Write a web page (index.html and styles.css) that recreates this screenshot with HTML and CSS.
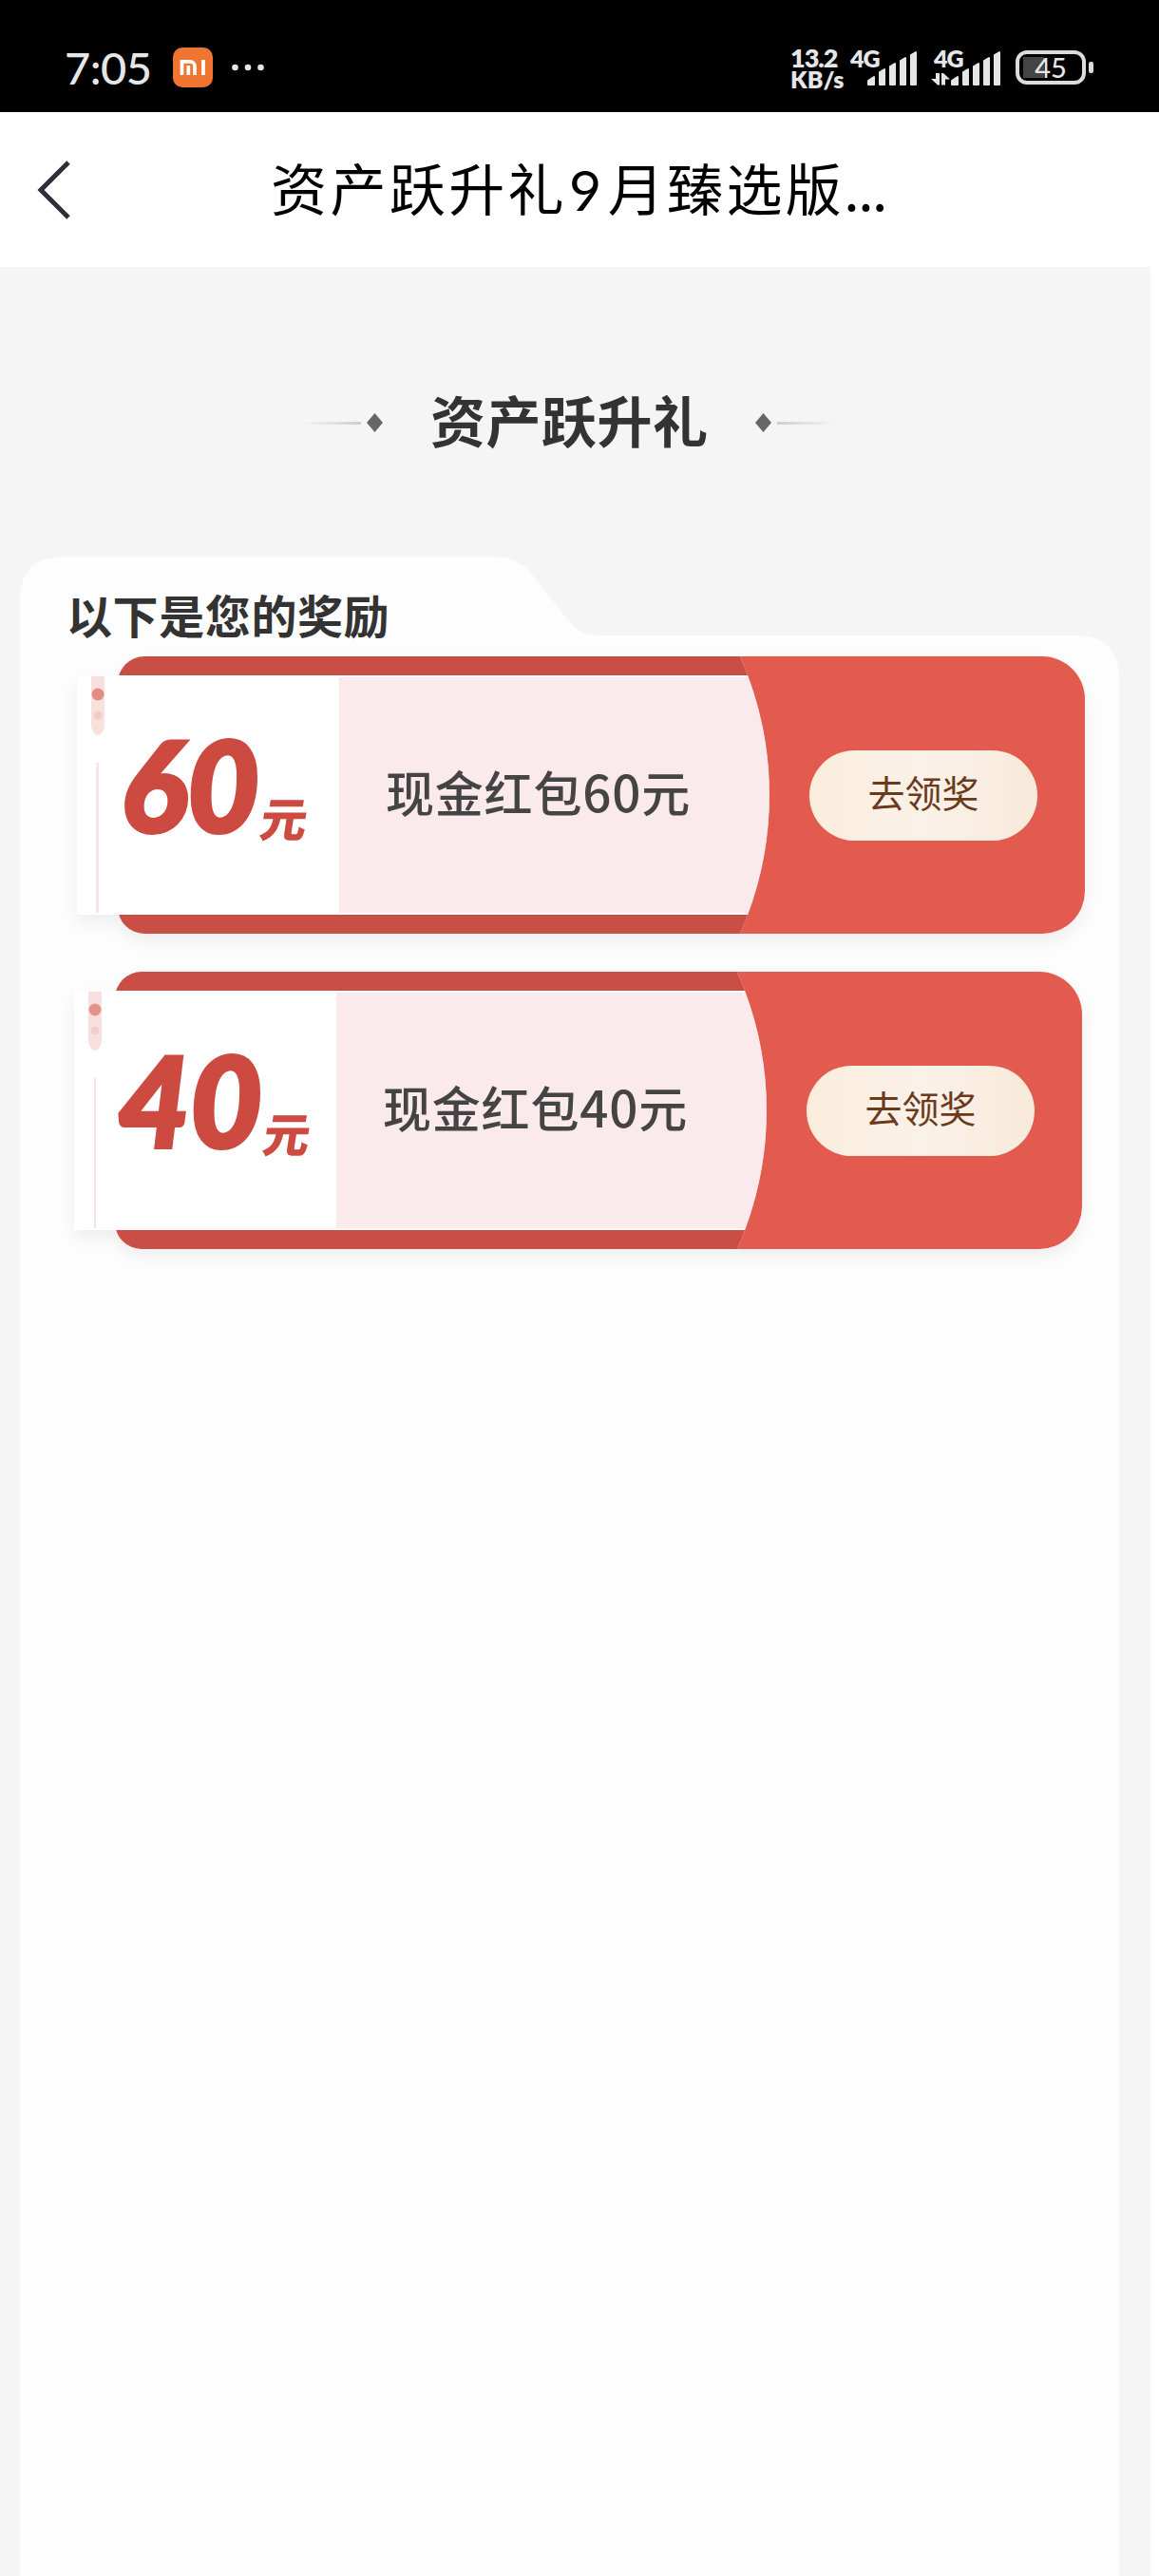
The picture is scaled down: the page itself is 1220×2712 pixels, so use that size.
FILE: index.html
```html
<!DOCTYPE html>
<html lang="zh-CN">
<head>
    <meta charset="UTF-8">
    <meta name="viewport" content="width=device-width, initial-scale=1.0">
    <title>资产跃升礼9月臻选版</title>
    <link rel="stylesheet" href="styles.css">
</head>
<body>
    <div class="status-bar">
        <span class="time">7:05</span>
        <svg class="app-icon" width="42" height="42" viewBox="0 0 42 42">
            <rect width="42" height="42" rx="10" fill="#f07530"/>
            <path d="M9.5 29V14.800H18a5 5 0 0 1 5 5V29M16.300 19v10M32 13v16" fill="none" stroke="#fff" stroke-width="3.800"/>
        </svg>
        <svg class="more" width="34" height="8" viewBox="0 0 34 8">
            <circle cx="3.5" cy="4" r="3.3"/><circle cx="17" cy="4" r="3.3"/><circle cx="30.5" cy="4" r="3.3"/>
        </svg>
        <div class="speed"><span>13.2</span><span class="unit">KB/s</span></div>
        <div class="signal">
            <span class="network">4G</span>
            <svg width="72" height="40" viewBox="0 0 72 40">
                <path d="M20 38V34l6-4v8zM32 38V25l5-3v16zM43 38V19l5-3v22zM54 38V13l5-3v28zM65 38V7l5-3v34z" stroke-width="2" stroke-linejoin="round"/>
            </svg>
        </div>
        <div class="signal second">
            <span class="network">4G</span>
            <svg width="72" height="40" viewBox="0 0 72 40">
                <path d="M20 38V34l6-4v8zM32 38V25l5-3v16zM43 38V19l5-3v22zM54 38V13l5-3v28zM65 38V7l5-3v34z" stroke-width="2" stroke-linejoin="round"/>
                <path d="M3 26h4v12.500H5L-2 32h5zM9 38.500V26h2l7 6.500h-5v6z"/>
            </svg>
        </div>
        <div class="battery"><span>45</span></div>
    </div>

    <header class="nav-bar">
        <svg class="back" width="36" height="64" viewBox="0 0 36 64">
            <path d="M33 3L4 32l29 29" fill="none" stroke="#312e3c" stroke-width="5"/>
        </svg>
        <h1>资产跃升礼<span class="digit">9</span>月臻选版<span class="dots">...</span></h1>
    </header>

    <main class="page">
        <div class="section-title">
            <i class="line"></i>
            <svg width="17" height="20" viewBox="0 0 17 20"><path d="M8.500 0L17 10 8.500 20 0 10z" fill="#666"/></svg>
            <h2>资产跃升礼</h2>
            <svg width="17" height="20" viewBox="0 0 17 20"><path d="M8.500 0L17 10 8.500 20 0 10z" fill="#666"/></svg>
            <i class="line right"></i>
        </div>

        <section class="panel">
            <!-- folder tab outline -->
            <svg class="panel-shape" width="1157" height="2127" viewBox="0 0 1157 2127">
                <path d="M0 2127V47Q0 1 46 1H500Q525 1 540 21L578 69Q590 84 612 84H1111Q1157 84 1157 130V2127z" fill="#fdfdfd"/>
            </svg>
            <h3>以下是您的奖励</h3>

            <div class="coupon">
                <svg class="coupon-shape" width="1061" height="292" viewBox="0 0 1061 292">
                    <rect x="43" width="500" height="292" rx="28" fill="#c94f46"/>
                    <path d="M250 0H698A359 359 0 0 1 698 292H250z" fill="#c94f46"/>
                    <path d="M698 0H1016a45 45 0 0 1 45 45V247a45 45 0 0 1-45 45H698A359 359 0 0 0 698 0z" fill="#e35b4e"/>
                    <path d="M0 20H706A359 359 0 0 1 706 272H0z" fill="#fff"/>
                    <path d="M276 22H706.500A359 359 0 0 1 706.500 270H276z" fill="#faeaeb"/>
                    <path d="M15 21H29V71A7 12 0 0 1 15 71z" fill="#f8e0df"/>
                    <circle cx="22" cy="40" r="6.500" fill="#e48d84"/>
                    <circle cx="22" cy="62" r="4.500" fill="#f5cbc7"/>
                    <rect x="20" y="112" width="3" height="158" fill="#f8e5e5"/>
                </svg>
                <div class="amount"><b>60</b><span>元</span></div>
                <div class="name">现金红包<span>60</span>元</div>
                <button>去领奖</button>
            </div>

            <div class="coupon shifted">
                <svg class="coupon-shape" width="1061" height="292" viewBox="0 0 1061 292">
                    <rect x="43" width="500" height="292" rx="28" fill="#c94f46"/>
                    <path d="M250 0H698A359 359 0 0 1 698 292H250z" fill="#c94f46"/>
                    <path d="M698 0H1016a45 45 0 0 1 45 45V247a45 45 0 0 1-45 45H698A359 359 0 0 0 698 0z" fill="#e35b4e"/>
                    <path d="M0 20H706A359 359 0 0 1 706 272H0z" fill="#fff"/>
                    <path d="M276 22H706.500A359 359 0 0 1 706.500 270H276z" fill="#faeaeb"/>
                    <path d="M15 21H29V71A7 12 0 0 1 15 71z" fill="#f8e0df"/>
                    <circle cx="22" cy="40" r="6.500" fill="#e2938b"/>
                    <circle cx="22" cy="62" r="4.500" fill="#f3cfca"/>
                    <rect x="21" y="112" width="2" height="158" fill="#f3e3da"/>
                </svg>
                <div class="amount"><b>40</b><span>元</span></div>
                <div class="name">现金红包<span>40</span>元</div>
                <button>去领奖</button>
            </div>
        </section>
    </main>
</body>
</html>
```

FILE: styles.css
```css
* {
    box-sizing: border-box;
}
body {
    margin: 0;
    width: 1220px;
    height: 2712px;
    overflow: hidden;
    background: #fff;
    font-family: "Noto Sans CJK SC", sans-serif;
}
h1, h2, h3 {
    margin: 0;
}
svg {
    display: block;
    flex: none;
}
.status-bar {
    display: flex;
    align-items: center;
    height: 118px;
    padding: 24px 68px 0 68px;
    background: #000;
    color: #e6e6e6;
    font-family: Lato, sans-serif;
}
.time {
    width: 114px;
    font-size: 47px;
    font-weight: 500;
    line-height: 48px;
    letter-spacing: -0.500px;
    white-space: nowrap;
}
.more {
    margin-left: 20px;
    fill: #e6e6e6;
}
.speed {
    display: flex;
    flex-direction: column;
    width: 62px;
    margin-left: 554px;
    padding-top: 1px;
    font-size: 27px;
    font-weight: 800;
    line-height: 22px;
    letter-spacing: -1px;
}
.speed .unit {
    font-size: 25px;
    letter-spacing: 0;
}
.signal {
    position: relative;
    width: 72px;
    height: 40px;
    fill: #e6e6e6;
    stroke: #e6e6e6;
    stroke-width: 0;
}
.signal svg {
    overflow: visible;
}
.signal.second {
    margin-left: 16px;
}
.network {
    position: absolute;
    left: 1px;
    top: -4px;
    font-size: 25px;
    font-weight: 800;
    line-height: 28px;
    letter-spacing: -1px;
}
.battery {
    position: relative;
    width: 74px;
    height: 36px;
    margin-left: 15px;
    border: 4px solid #dcdcdc;
    border-radius: 12px;
    background: linear-gradient(#444, #444) 4px 3px / 22px 22px no-repeat;
    font-size: 29px;
    font-weight: 500;
    line-height: 27px;
    text-align: center;
}
.battery::after {
    content: "";
    position: absolute;
    right: -12px;
    top: 8px;
    width: 5px;
    height: 12px;
    border-radius: 2px;
    background: #dcdcdc;
}
.nav-bar {
    display: flex;
    align-items: center;
    height: 163px;
    padding-left: 39px;
}
.nav-bar h1 {
    margin-left: 210px;
    padding-bottom: 3px;
    font-size: 59px;
    font-weight: 400;
    line-height: 64px;
    letter-spacing: 3.400px;
    white-space: nowrap;
}
.nav-bar .digit {
    margin: 0 3px 0 2px;
    font-family: Lato, sans-serif;
}
.nav-bar .dots {
    margin-left: -1px;
    letter-spacing: -1.500px;
}
.page {
    width: 1211px;
    height: 2431px;
    padding: 124px 0 0 21px;
    background: #f5f5f5;
}
.section-title {
    display: flex;
    align-items: center;
    height: 80px;
    margin-left: 299px;
}
.section-title h2 {
    margin: 0 49px 0 50px;
    padding-bottom: 8px;
    font-size: 58px;
    font-weight: 700;
    line-height: 80px;
    letter-spacing: 0.500px;
    color: #333;
    white-space: nowrap;
}
.line {
    width: 60px;
    height: 3px;
    margin-right: 6px;
    background: linear-gradient(to right, #f5f5f5, #d0cccc);
}
.line.right {
    margin: 0 0 0 6px;
    background: linear-gradient(to left, #f5f5f5, #d0cccc);
}
.panel {
    position: relative;
    width: 1157px;
    height: 2127px;
    margin-top: 100px;
    padding: 30px 0 0 60px;
}
.panel-shape {
    position: absolute;
    left: 0;
    top: 0;
}
.panel h3 {
    position: relative;
    height: 76px;
    margin-left: -11px;
    font-size: 48px;
    font-weight: 700;
    line-height: 62px;
    letter-spacing: 0.600px;
    color: #333;
}
.coupon {
    position: relative;
    display: flex;
    align-items: center;
    width: 1061px;
    height: 292px;
    margin-bottom: 40px;
}
.coupon.shifted {
    margin-left: -3px;
}
.coupon-shape {
    position: absolute;
    left: 0;
    top: 0;
    filter: drop-shadow(0 8px 8px rgba(0, 0, 0, 0.06));
}
.amount {
    position: relative;
    display: flex;
    align-items: flex-end;
    width: 276px;
    padding: 0 0 22px 46px;
    color: #cd4a40;
}
.amount b {
    font-family: Lato, sans-serif;
    font-size: 131px;
    font-style: italic;
    font-weight: 900;
    line-height: 140px;
    letter-spacing: 0;
    -webkit-text-stroke: 4px #cd4a40;
}
.amount span {
    margin: 0 0 6px 2px;
    font-size: 49px;
    font-weight: 900;
    line-height: 60px;
    transform: skewX(-9deg);
}
.name {
    position: relative;
    width: 495px;
    padding: 0 0 8px 49px;
    font-size: 51px;
    font-weight: 500;
    letter-spacing: 0.800px;
    color: #444;
    white-space: nowrap;
}
.name span {
    font-size: 53px;
    line-height: 50px;
}
button {
    position: relative;
    width: 240px;
    height: 95px;
    padding: 0 0 8px;
    border: none;
    border-radius: 48px;
    background: linear-gradient(to right, #faeddc, #faf1e8 50%, #f8eada);
    color: #6b3a1c;
    font-family: "Noto Sans CJK SC", sans-serif;
    font-size: 39px;
    cursor: pointer;
}
```
